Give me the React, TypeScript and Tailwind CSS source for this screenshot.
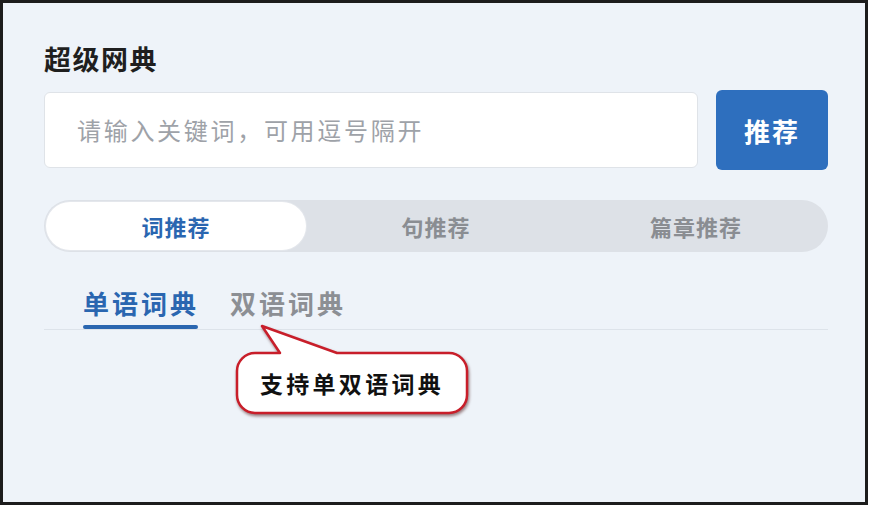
import React from "react";

export default function App() {
  const font = { fontFamily: '"Noto Sans CJK SC", "Noto Sans", sans-serif' };
  return (
    <div className="w-[873px] h-[509px] bg-white" style={font}>
      <div className="relative w-[868px] h-[505px] border-[3px] border-[#1c1c1c] bg-[#eef3f9] pt-[40px] pl-[41px] pr-[37px] flex flex-col">
        <div className="text-[27px] leading-[32px] font-bold text-[#1f1f1f] tracking-[1.5px]">超级网典</div>

        <div className="mt-[15px] flex items-center gap-[18px] h-[80px]">
          <div className="flex-1 h-[76px] rounded-[6px] border border-[#dfe3e8] bg-white flex items-center pl-[32px]">
            <input
              className="w-full bg-transparent outline-none text-[24px] tracking-[2.7px] text-[#333] placeholder:text-[#9ea2a8]"
              placeholder="请输入关键词，可用逗号隔开"
              style={font}
            />
          </div>
          <button className="w-[112px] h-[80px] rounded-[6px] bg-[#2e6fbe] text-white text-[26px] font-bold tracking-[2px] flex items-center justify-center">
            推荐
          </button>
        </div>

        <div className="mt-[30px] h-[52px] rounded-full bg-[#dde1e7] grid grid-cols-3 p-[2px]">
          <div className="rounded-full bg-white shadow-[0_0_0_1px_#e4e7ec] flex items-center justify-center text-[22px] font-bold text-[#2a66b0] tracking-[1px]">
            词推荐
          </div>
          <div className="flex items-center justify-center text-[22px] font-bold text-[#8a8d92] tracking-[1px]">
            句推荐
          </div>
          <div className="flex items-center justify-center text-[22px] font-bold text-[#8a8d92] tracking-[1px]">
            篇章推荐
          </div>
        </div>

        <div className="mt-[35px] flex items-end gap-[31px] pl-[39px] border-b border-[#dde3ea]">
          <div className="flex flex-col">
            <div className="text-[26px] leading-[32px] font-bold text-[#2a66b0] tracking-[3px]">单语词典</div>
            <div className="mt-[6px] h-[4px] w-[115px] rounded-full bg-[#2a66b0]" />
          </div>
          <div className="flex flex-col">
            <div className="text-[26px] leading-[32px] font-bold text-[#8c8f94] tracking-[3px]">双语词典</div>
            <div className="mt-[6px] h-[4px]" />
          </div>
        </div>

        <svg
          className="absolute left-[230px] top-[320px]"
          width="245"
          height="100"
          viewBox="233 323 245 100"
          style={{ filter: "drop-shadow(1px 2px 1.5px rgba(60,0,0,0.5))" }}
        >
          <path
            d="M255 353 L280 353 L262 326 L337 353 L449 353 A18 18 0 0 1 467 371 L467 395 A18 18 0 0 1 449 413 L255 413 A18 18 0 0 1 237 395 L237 371 A18 18 0 0 1 255 353 Z"
            fill="#ffffff"
            stroke="#c81e2a"
            strokeWidth="2.5"
            strokeLinejoin="round"
          />
        </svg>
        <div className="absolute left-[234px] top-[350px] w-[230px] h-[60px] flex items-center justify-center text-[23px] font-bold text-[#111] tracking-[3.3px]">
          支持单双语词典
        </div>
      </div>
    </div>
  );
}
